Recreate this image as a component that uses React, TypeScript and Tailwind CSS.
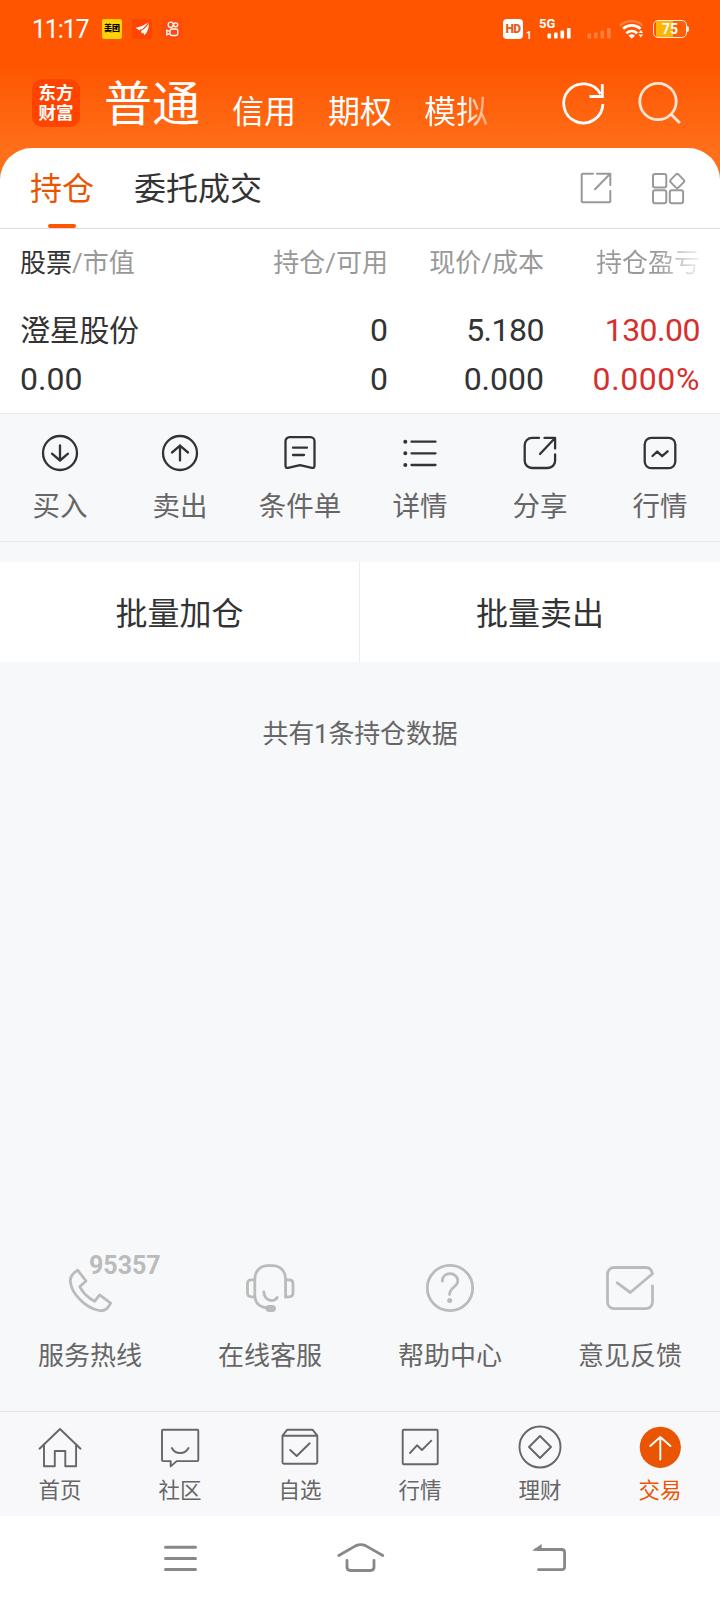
import type { ReactNode } from 'react';
import { clsx } from 'clsx';

interface IconProps {
  className?: string;
  stroke?: number;
  children: ReactNode;
  box?: string;
}

function Icon({ className, stroke = 2, box = '0 0 40 40', children }: IconProps) {
  return (
    <svg
      className={clsx('shrink-0', className)}
      viewBox={box}
      fill="none"
      stroke="currentColor"
      strokeWidth={stroke}
      strokeLinecap="round"
      strokeLinejoin="round"
    >
      {children}
    </svg>
  );
}

const accounts = ['信用', '期权', '模拟'];

const actions = [
  {
    label: '买入',
    icon: (
      <>
        <circle cx="20" cy="20" r="17" />
        <path d="M20 12.5v15M12 20.7l8 6.8 8-6.8" />
      </>
    ),
  },
  {
    label: '卖出',
    icon: (
      <>
        <circle cx="20" cy="20" r="17" />
        <path d="M20 27.5v-15M12 19.5l8-6.8 8 6.8" />
      </>
    ),
  },
  {
    label: '条件单',
    icon: (
      <>
        <path d="M9.5 4.2h21a4 4 0 0 1 4 4v24.6q0 2.6-2.6 2L20 32.2l-11.9 2.6q-2.6.6-2.6-2V8.2a4 4 0 0 1 4-4z" />
        <path d="M13 14.7h14M13 22h11" />
      </>
    ),
  },
  {
    label: '详情',
    icon: (
      <>
        <path d="M11.5 8.7h24M11.5 20.3h24M11.5 32h24" />
        <path strokeWidth="4" d="M5.3 8.7h.01M5.3 20.3h.01M5.3 32h.01" />
      </>
    ),
  },
  {
    label: '分享',
    icon: (
      <>
        <path d="M19 4.9H12a7.3 7.3 0 0 0-7.3 7.3v15.5A7.3 7.3 0 0 0 12 35h15.8a7.3 7.3 0 0 0 7.3-7.3V21.500" />
        <path d="M24.5 4.9h10.6v10.6M34.8 5.3 20 21" />
      </>
    ),
  },
  {
    label: '行情',
    icon: (
      <>
        <rect x="4.7" y="4.9" width="30.6" height="30.2" rx="6.5" />
        <path d="M12.5 23l4.7-4.5 4.9 4.7 5.5-4.9" />
      </>
    ),
  },
];

const services = [
  {
    label: '服务热线',
    badge: '95357',
    icon: (
      <path d="M13.7 8.2 22 19l-6.3 5.7C19 31 24 36 30.6 39.3l5-6.4 11 8.2c-2.5 5.5-6.600 8.4-11.600 7.4C21 46 7 31 6.3 19c-.1-4 2.7-8 7.4-10.800z" />
    ),
  },
  {
    label: '在线客服',
    icon: (
      <>
        <path d="M10.8 35V17c0-8 6-13.3 13-13.3h4.8c7 0 13 5.3 13 13.3v18" />
        <path d="M10.8 17.8H7.5q-4 0-4 4v9q0 4 4 4h3.3M41.6 17.8H45q4 0 4 4v9q0 4-4 4h-3.4" />
        <path d="M19.8 30c.5 9 10.5 11 13.4 5.5M10.8 35c1 6.5 5 10.3 12 11" />
        <rect x="23" y="44.3" width="7.5" height="4.2" rx="2" fill="currentColor" />
      </>
    ),
  },
  {
    label: '帮助中心',
    icon: (
      <>
        <circle cx="26" cy="26" r="22.7" />
        <path d="M18.3 19.2c0-4.5 3.3-7.5 7.7-7.5s7.8 3 7.8 7.3c0 5.7-8.3 6.5-8.3 13.5" />
        <path strokeWidth="5" d="M25.7 38.6h.01" />
      </>
    ),
  },
  {
    label: '意见反馈',
    icon: (
      <path d="M48.5 24v16.2a6.5 6.5 0 0 1-6.5 6.5H10a6.5 6.5 0 0 1-6.5-6.5V12A6.5 6.5 0 0 1 10 5.5h32q5 0 6.500 6.3L26.3 30.5 13.2 20.8" />
    ),
  },
];

const tabs = [
  {
    label: '首页',
    icon: (
      <>
        <path d="M1.5 24.7 22 5l20.5 19.7" />
        <path d="M6 20.5v21.8h10.8V27h10.5v15.3h10.8V20.5" />
      </>
    ),
  },
  {
    label: '社区',
    icon: (
      <>
        <path d="M5 5.7h34.3q1 0 1 1v29.4q0 1-1 1H18.700l-6 5.3v-5.3H5q-1 0-1-1V6.7q0-1 1-1z" />
        <path d="M13.8 24c3.7 6.7 13 6.7 16.7 0" />
      </>
    ),
  },
  {
    label: '自选',
    icon: (
      <>
        <path d="M4.5 11.7 9.3 5.7h25.2l4.8 6v26.5q0 1.5-1.5 1.5H6q-1.5 0-1.5-1.5zh34.8" />
        <path d="M12.2 26l6.5 6 13-12.7" />
      </>
    ),
  },
  {
    label: '行情',
    icon: (
      <>
        <rect x="4.7" y="5.7" width="35" height="34.6" rx="1" />
        <path d="M12 29l7-7.7 5 4.7 9.3-9.3" />
      </>
    ),
  },
  {
    label: '理财',
    icon: (
      <>
        <circle cx="22" cy="23" r="20.5" />
        <path d="M22 12l11 11-11 11-11-11z" />
      </>
    ),
  },
  {
    label: '交易',
    active: true,
    icon: (
      <>
        <circle cx="22.3" cy="23.3" r="20.6" fill="currentColor" stroke="none" />
        <path stroke="#fff" d="M22.3 35.5V13M12.2 22l10.1-9 10.2 9" />
      </>
    ),
  },
];

function StatusBar() {
  return (
    <div className="flex h-[58px] items-center pl-8 pr-[31px]">
      <span className="w-[56px] whitespace-nowrap text-[25px] leading-none tracking-[-1.2px]">11:17</span>
      <span className="ml-[14px] flex h-5 w-5 shrink-0 items-center justify-center whitespace-nowrap rounded-[2px] bg-[#ffd10a] text-[8px] font-black leading-none text-black">
        美团
      </span>
      <span className="ml-[10px] flex h-5 w-5 items-center justify-center rounded-[3px] bg-[#ff4504]">
        <svg className="h-5 w-5" viewBox="0 0 20 20" fill="#fff">
          <path d="M3.500 8.700C8 8.300 12 6 16.700 3.500c-2 2-4 4.500-7.200 7.200L8.300 10l-.8 1.500z" />
          <path d="M16.800 4.500c.3 4.500-1.300 8.500-4.300 11.800l-1.300-2.500-1.500.7-.7-2.500c3-1.500 5.500-4 7.800-7.500z" />
        </svg>
      </span>
      <span className="ml-[10px] flex h-5 w-5 items-center justify-center rounded-[3px] bg-[#ff4b10]">
        <svg className="h-5 w-5" viewBox="0 0 20 20" fill="none" stroke="#fff" strokeWidth="1.3">
          <circle cx="8.700" cy="5.800" r="2.600" />
          <circle cx="13.700" cy="5.800" r="2" />
          <rect x="8" y="10" width="7.800" height="6.500" rx="1.800" />
          <path d="M8 12.500l-3.200-1.300v4.500L8 14.400" />
        </svg>
      </span>

      <div className="ml-auto flex items-center">
        <span className="flex h-5 w-5 items-center justify-center rounded bg-white text-[12px] font-black leading-none tracking-[-0.5px] text-[#e2601c]">
          HD
        </span>
        <span className="ml-[3px] mt-[13px] w-[5px] text-[10px] font-bold leading-none">1</span>
        <div className="relative ml-2 h-5 w-[33px]">
          <span className="absolute left-0 top-0 text-[13px] font-bold leading-[10px]">5G</span>
          <svg className="h-5 w-[33px]" viewBox="0 0 33 20" fill="#fff">
            <rect x="8.5" y="14.5" width="3.6" height="5" rx="1" />
            <rect x="15" y="13.5" width="3.6" height="6" rx="1" />
            <rect x="21.5" y="11.5" width="3.6" height="8" rx="1" />
            <rect x="28" y="9" width="3.6" height="10.5" rx="1" />
          </svg>
        </div>
        <svg className="ml-[15px] h-5 w-6" viewBox="0 0 24 20" fill="#fff" opacity="0.25">
          <rect x="0.5" y="14.5" width="3.6" height="5" rx="1" />
          <rect x="7" y="13.5" width="3.6" height="6" rx="1" />
          <rect x="13.5" y="11.5" width="3.6" height="8" rx="1" />
          <rect x="20" y="9" width="3.6" height="10.5" rx="1" />
        </svg>
        <svg className="ml-2 h-5 w-[26px]" viewBox="0 0 26 20" fill="none" stroke="#fff" strokeWidth="2.8">
          <path opacity="0.25" strokeWidth="2.2" d="M1 6.5C7.5.7 17.5.7 24 6.5" />
          <path d="M4 9.8c5-4.500 12.500-4.500 17.500 0M7.3 14.200c3.300-2.800 7.600-2.800 10.900 0" />
          <path fill="#fff" stroke="none" d="M9.5 16.500q3.200-2.300 6.500 0l-3.300 3.300zM19.500 14l2.300-3 2.300 3zM19.500 15.500h4.600l-2.300 3z" />
        </svg>
        <div className="ml-2 flex h-[18px] w-[34px] items-center justify-center rounded-[5px] border-[1.5px] border-[#ffe9dc] bg-[linear-gradient(90deg,#ff5500_6%,#ffb400_6%,#ffb400_58%,#ff5f08_58%)] text-[14px] font-bold leading-none">
          75
        </div>
        <div className="h-1.5 w-[2px] rounded-r bg-[#ffe9dc]" />
      </div>
    </div>
  );
}

function Header() {
  return (
    <header className="h-[180px] bg-[linear-gradient(180deg,#ff5500_0px,#ff5500_64px,#ff6e19_148px)] text-white">
      <StatusBar />
      <div className="flex h-[90px] items-center pl-8 pr-[36px]">
        <div className="flex h-12 w-12 shrink-0 flex-col items-center justify-center rounded-[10px] bg-[#ff4400] text-[17.5px] font-bold leading-[20px]">
          <span>东方</span>
          <span>财富</span>
        </div>
        <div className="ml-6 flex items-center gap-8 leading-none">
          <span className="pt-1 text-[48px]">普通</span>
          {accounts.map((name) => (
            <span
              key={name}
              className={clsx(
                'mt-[17px] text-[32px]',
                name === '模拟' && 'bg-gradient-to-r from-white from-60% to-white/40 bg-clip-text text-transparent'
              )}
            >
              {name}
            </span>
          ))}
        </div>
        <Icon className="ml-auto h-12 w-12" box="0 0 48 48" stroke={2.8}>
          <path strokeLinecap="butt" d="M42.9 25A19.6 19.6 0 1 1 40.5 15" />
          <path strokeLinecap="butt" strokeLinejoin="miter" d="M42.3 5v12.5H29.5" />
        </Icon>
        <Icon className="ml-7 h-12 w-12 text-[#ffe6d6]" box="0 0 48 48" stroke={2.8}>
          <circle cx="22" cy="22.5" r="18.2" />
          <path strokeLinecap="butt" d="M34.8 35l9 9" />
        </Icon>
      </div>
    </header>
  );
}

function Holdings() {
  return (
    <section className="-mt-8 rounded-t-[32px] bg-white">
      <div className="flex h-[81px] items-stretch border-b border-[#dcdcdc] pl-[30px] pr-8 text-[32px]">
        <div className="flex w-16 flex-col items-center text-[#ea5504]">
          <span className="flex h-[76px] items-center pt-[6px]">持仓</span>
          <span className="h-1 w-7 shrink-0 rounded-sm bg-[#ff5500]" />
        </div>
        <span className="ml-10 flex h-[76px] items-center pt-[6px]">委托成交</span>
        <div className="ml-auto flex items-start gap-8 pt-5 text-[#999]">
          <Icon className="h-10 w-10">
            <path d="M17 5.7H6.7q-1 0-1 1v26.6q0 1 1 1h26.6q1 0 1-1V23" />
            <path d="M21 5.7h13.3V17M34 6 19 21.3" />
          </Icon>
          <Icon className="h-10 w-10">
            <rect x="5" y="6" width="13.3" height="13.5" rx="2" />
            <rect x="5" y="22.3" width="13.3" height="13" rx="2" />
            <rect x="21.8" y="22.3" width="13.3" height="13" rx="2" />
            <rect x="23.7" y="7.5" width="11" height="11" rx="2" transform="rotate(45 29.2 13)" />
          </Icon>
        </div>
      </div>

      <div className="grid h-[69px] grid-cols-[212px_156px_156px_156px] items-center px-5 text-right text-[26px] text-[#999]">
        <span className="text-left">
          <span className="text-[#333]">股票</span>/市值
        </span>
        <span>持仓/可用</span>
        <span>现价/成本</span>
        <span className="bg-[linear-gradient(90deg,#999_72%,#9992_100%)] bg-clip-text text-transparent">持仓盈亏</span>
      </div>

      <div className="grid h-[115px] grid-cols-[212px_156px_156px_156px] grid-rows-[49px_49px] px-5 pt-2 text-right text-[32px] leading-[49px]">
        <span className="text-left text-[30px] tracking-[-0.3px]">澄星股份</span>
        <span>0</span>
        <span className="tracking-[-0.5px]">5.180</span>
        <span className="tracking-[-0.5px] text-[#d6302e]">130.00</span>
        <span className="text-left">0.00</span>
        <span>0</span>
        <span>0.000</span>
        <span className="tracking-[0.6px] text-[#d6302e]">0.000%</span>
      </div>
    </section>
  );
}

export default function App() {
  return (
    <div className="flex h-[1600px] w-[720px] flex-col overflow-hidden bg-[#f7f8fa] font-[Roboto,'Noto_Sans_CJK_SC',sans-serif] text-[#333]">
      <Header />
      <Holdings />

      {/* Actions for the selected stock */}
      <div className="grid h-[129px] grid-cols-6 border-y border-[#e9eaec]">
        {actions.map((item) => (
          <div key={item.label} className="flex flex-col items-center pt-[19px]">
            <Icon className="h-10 w-10" stroke={2.3}>
              {item.icon}
            </Icon>
            <span className="mt-[13px] text-[27.5px] leading-[42px] text-[#666]">{item.label}</span>
          </div>
        ))}
      </div>

      {/* Batch buttons */}
      <div className="mt-5 grid h-[100px] grid-cols-2 bg-white text-[32px]">
        <button className="border-r border-[#ebebeb] pt-1">批量加仓</button>
        <button className="pt-1">批量卖出</button>
      </div>

      <p className="mt-[52px] text-center text-[26px] leading-10 tracking-[-0.2px] text-[#666]">共有1条持仓数据</p>

      {/* Customer service */}
      <div className="mt-auto grid h-[149px] grid-cols-4">
        {services.map((item) => (
          <div key={item.label} className="relative flex flex-col items-center">
            <Icon className="h-[52px] w-[52px] text-[#bbb]" box="0 0 52 52" stroke={2.8}>
              {item.icon}
            </Icon>
            <span className="mt-[22px] text-[26px] leading-10 text-[#666]">{item.label}</span>
            {item.badge && (
              <span className="absolute left-[89px] top-[-7px] text-[25px] font-bold leading-[22px] text-[#bbb]">
                {item.badge}
              </span>
            )}
          </div>
        ))}
      </div>

      <nav className="grid h-[105px] grid-cols-6 border-t border-[#e2e2e4] bg-[#f8f8fa]">
        {tabs.map((item) => (
          <div
            key={item.label}
            className={clsx('flex flex-col items-center pt-3', item.active ? 'text-[#ea5504]' : 'text-[#666]')}
          >
            <Icon className="h-12 w-11" box="0 0 44 48" stroke={1.9}>
              {item.icon}
            </Icon>
            <span className="mt-[3px] text-[21.5px] leading-8">{item.label}</span>
          </div>
        ))}
      </nav>

      {/* System buttons */}
      <div className="flex h-[84px] items-start bg-white pl-[162px] pt-[26px] text-[#888]">
        <Icon className="h-8 w-9" box="0 0 36 32" stroke={3}>
          <path d="M3.5 5.3h30M3.5 16.500h30M3.5 27.5h30" />
        </Icon>
        <Icon className="ml-[138px] h-8 w-[50px]" box="0 0 50 32" stroke={2.8}>
          <path d="M2.8 13.5 20 3.6q4.7-2 9.500 0l17.300 9.900" />
          <path d="M11 18.5V25q0 3.5 3.5 3.5h20q3.500 0 3.5-3.5v-6.5" />
        </Icon>
        <Icon className="ml-[144px] h-8 w-10" box="0 0 40 32" stroke={2.8}>
          <path d="M6 7.5h25.6q3 0 3 3v14.2q0 3-3 3H8.5" />
          <path fill="currentColor" stroke="none" d="M2 8.8 11.7 2v6.8z" />
        </Icon>
      </div>
    </div>
  );
}
